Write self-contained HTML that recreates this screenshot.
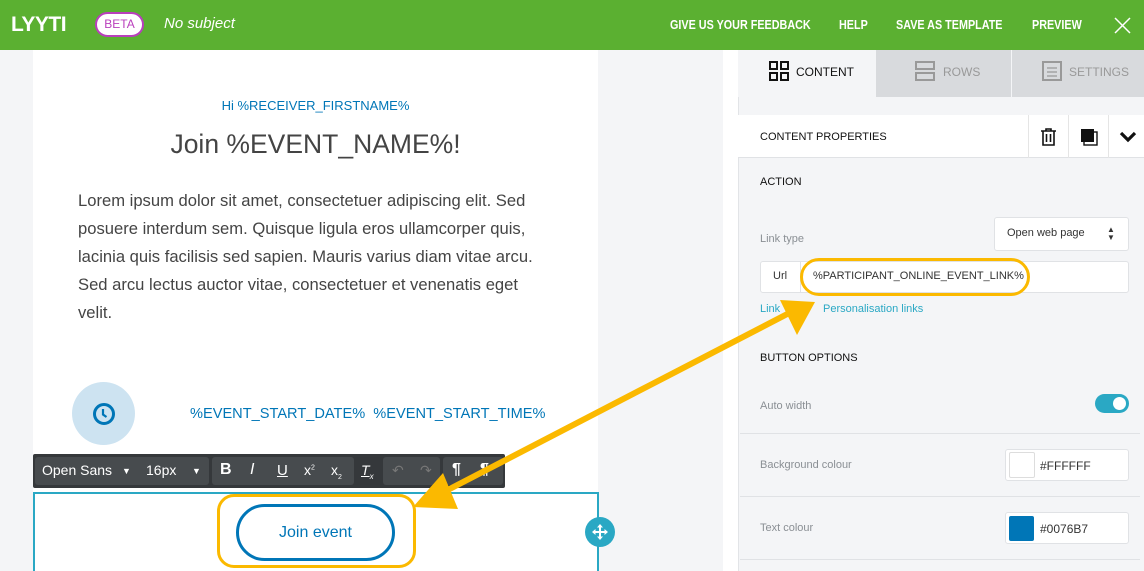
<!DOCTYPE html>
<html><head><meta charset="utf-8"><style>
*{margin:0;padding:0;box-sizing:border-box}
body{width:1144px;height:571px;overflow:hidden;position:relative;font-family:"Liberation Sans",sans-serif;background:#f4f5f7}
.a{position:absolute}
.top{left:0;top:0;width:1144px;height:50px;background:#5bb031}
.nav{color:#fff;font-size:13px;font-weight:bold;top:17px;transform:scaleX(0.83);transform-origin:left;white-space:nowrap}
.panel{left:738px;top:50px;width:406px;height:521px;background:#f4f5f7;border-left:1px solid #e2e4e7}
.lbl{color:#8a8f94;font-size:11px}
.hd{color:#111;font-size:11px}
.sep{height:1px;background:#e0e2e5;left:740px;width:400px}
.tb{background:#474b4e;border-radius:3px;top:457px;height:28px}
.tt{color:#fff;font-size:14px;top:462px}
</style></head><body>
<div class="a top"></div>
<div class="a" style="left:11px;top:13px;color:#fff;font-weight:900;font-size:21px;letter-spacing:-0.5px">LYYTI</div>
<div class="a" style="left:95px;top:12px;width:49px;height:25px;border:2px solid #b93fbc;border-radius:13px;background:#fff;color:#b93fbc;font-size:12px;text-align:center;line-height:21px">BETA</div>
<div class="a" style="left:164px;top:15px;color:#fff;font-style:italic;font-size:15px">No subject</div>
<div class="a nav" style="left:670px">GIVE US YOUR FEEDBACK</div>
<div class="a nav" style="left:839px">HELP</div>
<div class="a nav" style="left:896px">SAVE AS TEMPLATE</div>
<div class="a nav" style="left:1032px">PREVIEW</div>
<svg class="a" style="left:1114px;top:17px" width="17" height="17"><path d="M1 1L16 16M16 1L1 16" stroke="#fff" stroke-width="1.5"/></svg>

<div class="a" style="left:723px;top:50px;width:15px;height:521px;background:#fff"></div>
<div class="a" style="left:33px;top:50px;width:565px;height:521px;background:#fff"></div>
<div class="a" style="left:33px;top:98px;width:565px;text-align:center;color:#0076b7;font-size:13px">Hi %RECEIVER_FIRSTNAME%</div>
<div class="a" style="left:33px;top:129px;width:565px;text-align:center;color:#444;font-size:26.5px">Join %EVENT_NAME%!</div>
<div class="a" style="left:78px;top:187px;color:#444;font-size:16.6px;line-height:28px;white-space:nowrap">Lorem ipsum dolor sit amet, consectetuer adipiscing elit. Sed<br>posuere interdum sem. Quisque ligula eros ullamcorper quis,<br>lacinia quis facilisis sed sapien. Mauris varius diam vitae arcu.<br>Sed arcu lectus auctor vitae, consectetuer et venenatis eget<br>velit.</div>
<div class="a" style="left:72px;top:382px;width:63px;height:63px;border-radius:50%;background:#cde3f1"></div>
<svg class="a" style="left:92px;top:402px" width="24" height="24"><circle cx="12" cy="12" r="9.5" fill="none" stroke="#0076b7" stroke-width="3"/><path d="M11 7V12.5L14.5 15" fill="none" stroke="#0076b7" stroke-width="2.2"/></svg>
<div class="a" style="left:190px;top:406px;color:#0076b7;font-size:14.6px;white-space:nowrap">%EVENT_START_DATE%&nbsp; %EVENT_START_TIME%</div>

<div class="a" style="left:33px;top:454px;width:472px;height:34px;background:#35383b;border-radius:2px"></div>
<div class="a tb" style="left:35px;width:174px"></div>
<div class="a tb" style="left:212px;width:142px"></div>
<div class="a tb" style="left:383px;width:57px"></div>
<div class="a tb" style="left:443px;width:60px"></div>
<div class="a tt" style="left:42px">Open Sans</div>
<div class="a tt" style="left:122px;font-size:9px;top:466px">▼</div>
<div class="a tt" style="left:146px">16px</div>
<div class="a tt" style="left:192px;font-size:9px;top:466px">▼</div>
<div class="a tt" style="left:220px;font-weight:bold;font-size:16px;top:461px">B</div>
<div class="a tt" style="left:250px;font-style:italic;font-size:16px;top:461px">I</div>
<div class="a tt" style="left:277px;text-decoration:underline;font-size:15px">U</div>
<div class="a tt" style="left:304px">x<sup style="font-size:7px">2</sup></div>
<div class="a tt" style="left:331px">x<sub style="font-size:7px">2</sub></div>
<div class="a tt" style="left:361px;font-style:italic;text-decoration:underline">T<sub style="font-size:8px">x</sub></div>
<div class="a tt" style="left:392px;color:#777">↶</div>
<div class="a tt" style="left:420px;color:#777">↷</div>
<div class="a tt" style="left:452px;font-weight:bold;font-size:16px;top:461px">¶</div>
<div class="a tt" style="left:480px;font-weight:bold;font-size:16px;top:461px">¶</div>

<div class="a" style="left:33px;top:492px;width:566px;height:79px;border:2px solid #2aa8c4;border-bottom:none"></div>
<div class="a" style="left:217px;top:494px;width:199px;height:74px;border:3px solid #fbb900;border-radius:17px"></div>
<div class="a" style="left:236px;top:504px;width:159px;height:57px;border:3px solid #0076b7;border-radius:29px;text-align:center;line-height:51px;color:#0076b7;font-size:16px">Join event</div>
<div class="a" style="left:585px;top:517px;width:30px;height:30px;border-radius:50%;background:#2aa8c4"></div>
<svg class="a" style="left:591px;top:523px" width="18" height="18"><path d="M9 2V16M2 9H16" stroke="#fff" stroke-width="2"/><path d="M9 1L6 4.5H12ZM9 17L6 13.5H12ZM1 9L4.5 6V12ZM17 9L13.5 6V12Z" fill="#fff"/></svg>

<div class="a panel"></div>
<div class="a" style="left:738px;top:50px;width:138px;height:47px;background:#f4f5f7"></div>
<div class="a" style="left:876px;top:50px;width:135px;height:47px;background:#d8dadd"></div>
<div class="a" style="left:1012px;top:50px;width:132px;height:47px;background:#d8dadd"></div>
<svg class="a" style="left:769px;top:61px" width="20" height="20"><g fill="none" stroke="#111" stroke-width="2"><rect x="1" y="1" width="7" height="7"/><rect x="12" y="1" width="7" height="7"/><rect x="1" y="12" width="7" height="7"/><rect x="12" y="12" width="7" height="7"/></g></svg>
<div class="a" style="left:796px;top:65px;font-size:12px;color:#111">CONTENT</div>
<svg class="a" style="left:915px;top:61px" width="20" height="20"><g fill="none" stroke="#999" stroke-width="2"><rect x="1" y="1" width="18" height="7"/><rect x="1" y="12" width="18" height="7"/></g></svg>
<div class="a" style="left:943px;top:65px;font-size:12px;color:#999">ROWS</div>
<svg class="a" style="left:1042px;top:61px" width="20" height="20"><g fill="none" stroke="#999" stroke-width="2"><rect x="1" y="1" width="18" height="18"/><path d="M5 7H15M5 11H15M5 15H15" stroke-width="1.3"/></g></svg>
<div class="a" style="left:1069px;top:65px;font-size:12px;color:#999">SETTINGS</div>

<div class="a" style="left:738px;top:115px;width:406px;height:43px;background:#fff;border-bottom:1px solid #e0e2e5"></div>
<div class="a hd" style="left:760px;top:131px">CONTENT PROPERTIES</div>
<div class="a" style="left:1028px;top:115px;width:1px;height:43px;background:#e5e5e5"></div>
<div class="a" style="left:1068px;top:115px;width:1px;height:43px;background:#e5e5e5"></div>
<div class="a" style="left:1108px;top:115px;width:1px;height:43px;background:#e5e5e5"></div>
<svg class="a" style="left:1040px;top:128px" width="17" height="18"><g fill="none" stroke="#111" stroke-width="1.6"><path d="M1 3H16M6 3V1H11V3M3 3V17H14V3M6.5 6V14M10.5 6V14"/></g></svg>
<svg class="a" style="left:1080px;top:128px" width="18" height="18"><rect x="4" y="4" width="13" height="13" fill="none" stroke="#111" stroke-width="1.4"/><rect x="1" y="1" width="13" height="13" fill="#111"/></svg>
<svg class="a" style="left:1119px;top:131px" width="18" height="12"><path d="M2 2L9 9L16 2" fill="none" stroke="#111" stroke-width="3.2"/></svg>

<div class="a hd" style="left:760px;top:176px">ACTION</div>
<div class="a lbl" style="left:760px;top:233px">Link type</div>
<div class="a" style="left:994px;top:217px;width:135px;height:34px;background:#fff;border:1px solid #e0e2e5;border-radius:3px;font-size:11px;color:#333;padding:9px 12px">Open web page</div>
<div class="a" style="left:1107px;top:226px;font-size:8px;color:#333;line-height:8px">▲<br>▼</div>
<div class="a" style="left:760px;top:261px;width:369px;height:32px;background:#fff;border:1px solid #e0e2e5;border-radius:3px"></div>
<div class="a" style="left:800px;top:261px;width:1px;height:32px;background:#e0e2e5"></div>
<div class="a" style="left:773px;top:270px;font-size:11px;color:#333">Url</div>
<div class="a" style="left:800px;top:258px;width:230px;height:38px;border:3px solid #fbb900;border-radius:19px"></div>
<div class="a" style="left:813px;top:270px;font-size:11px;color:#333">%PARTICIPANT_ONLINE_EVENT_LINK%</div>
<div class="a" style="left:760px;top:303px;font-size:11px;color:#2aa8c4">Link</div>
<div class="a" style="left:823px;top:303px;font-size:11px;color:#2aa8c4">Personalisation links</div>
<div class="a hd" style="left:760px;top:352px">BUTTON OPTIONS</div>
<div class="a lbl" style="left:760px;top:400px">Auto width</div>
<div class="a" style="left:1095px;top:394px;width:34px;height:19px;border-radius:10px;background:#2aa8c4"></div>
<div class="a" style="left:1113px;top:397px;width:13px;height:13px;border-radius:50%;background:#fff"></div>
<div class="a sep" style="top:433px"></div>
<div class="a lbl" style="left:760px;top:459px">Background colour</div>
<div class="a" style="left:1005px;top:449px;width:124px;height:32px;background:#fff;border:1px solid #e0e2e5;border-radius:3px"></div>
<div class="a" style="left:1009px;top:452px;width:26px;height:26px;background:#fff;border:1px solid #ddd;border-radius:2px"></div>
<div class="a" style="left:1040px;top:459px;font-size:12px;color:#333">#FFFFFF</div>
<div class="a sep" style="top:496px"></div>
<div class="a lbl" style="left:760px;top:522px">Text colour</div>
<div class="a" style="left:1005px;top:512px;width:124px;height:32px;background:#fff;border:1px solid #e0e2e5;border-radius:3px"></div>
<div class="a" style="left:1009px;top:516px;width:25px;height:25px;background:#0076b7;border-radius:2px"></div>
<div class="a" style="left:1040px;top:522px;font-size:12px;color:#333">#0076B7</div>
<div class="a sep" style="top:559px"></div>

<svg class="a" style="left:0;top:0" width="1144" height="571"><g fill="#fbb900"><line x1="440" y1="494" x2="795" y2="310" stroke="#fbb900" stroke-width="6"/><path d="M413 507L443 473L458 509Z"/><path d="M815 302L780 300L797 335Z"/></g></svg>
</body></html>
